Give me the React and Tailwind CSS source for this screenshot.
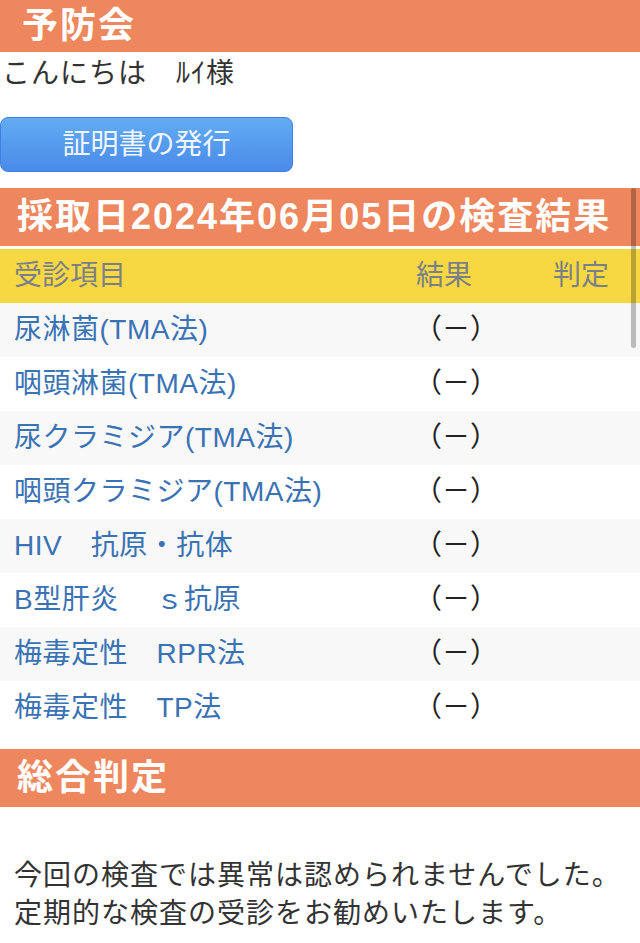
import React from 'react';

const font = { fontFamily: '"Liberation Sans", "Noto Sans CJK JP", sans-serif' };

const items = [
  '尿淋菌(TMA法)',
  '咽頭淋菌(TMA法)',
  '尿クラミジア(TMA法)',
  '咽頭クラミジア(TMA法)',
  'HIV　抗原・抗体',
  'B型肝炎　 ｓ抗原',
  '梅毒定性　RPR法',
  '梅毒定性　TP法',
];

function SectionTitle({ children, tall = true }) {
  return (
    <div
      className={`${tall ? 'h-[58px] pl-[17px]' : 'h-[52px] pl-[22px]'} flex items-center bg-[#ee875d] text-[36px] font-bold leading-none tracking-[2px] text-white`}
    >
      {children}
    </div>
  );
}

export default function App() {
  return (
    <div className="relative min-h-[943px] bg-white text-[#333]" style={font}>
      <SectionTitle tall={false}>予防会</SectionTitle>

      <div className="pl-[2px] text-[28px] leading-[44px] tracking-[1px] text-[#333]">こんにちは　ﾙｲ様</div>

      <button className="mt-[21px] flex h-[55px] w-[293px] items-center justify-center rounded-lg border border-[#3f7fe6] bg-gradient-to-b from-[#62acf2] to-[#4a8ae9] text-[28px] text-[#f2f6ff]">
        証明書の発行
      </button>

      <div className="mt-[16px]">
        <SectionTitle>採取日2024年06月05日の検査結果</SectionTitle>
      </div>

      <div className="mt-[3px]">
        <div className="flex h-[54px] items-center bg-[#f7d842] text-[28px] text-[#7b7f88]">
          <div className="flex-1 pl-[14px]">受診項目</div>
          <div className="w-[137px]">結果</div>
          <div className="w-[87px]">判定</div>
        </div>
        {items.map((name, i) => (
          <div
            key={i}
            className={`flex h-[54px] items-center text-[28px] ${i % 2 === 0 ? 'bg-[#f8f8f8]' : 'bg-white'}`}
          >
            <div className="flex-1 whitespace-pre pl-[14px] tracking-[0.5px] text-[#3a72b4]">{name}</div>
            <div className="w-[137px] -ml-[2px] text-[#222]">（－）</div>
            <div className="w-[89px]"></div>
          </div>
        ))}
      </div>

      <div className="mt-[14px]">
        <SectionTitle>総合判定</SectionTitle>
      </div>

      <p className="mt-[50px] pl-[14px] text-[28px] leading-[38px] tracking-[1px] text-[#333]">
        今回の検査では異常は認められませんでした。
        <br />
        定期的な検査の受診をお勧めいたします。
      </p>

      <div className="absolute right-[4px] top-[188px] h-[160px] w-[5px] rounded-full bg-black/25" />
    </div>
  );
}
